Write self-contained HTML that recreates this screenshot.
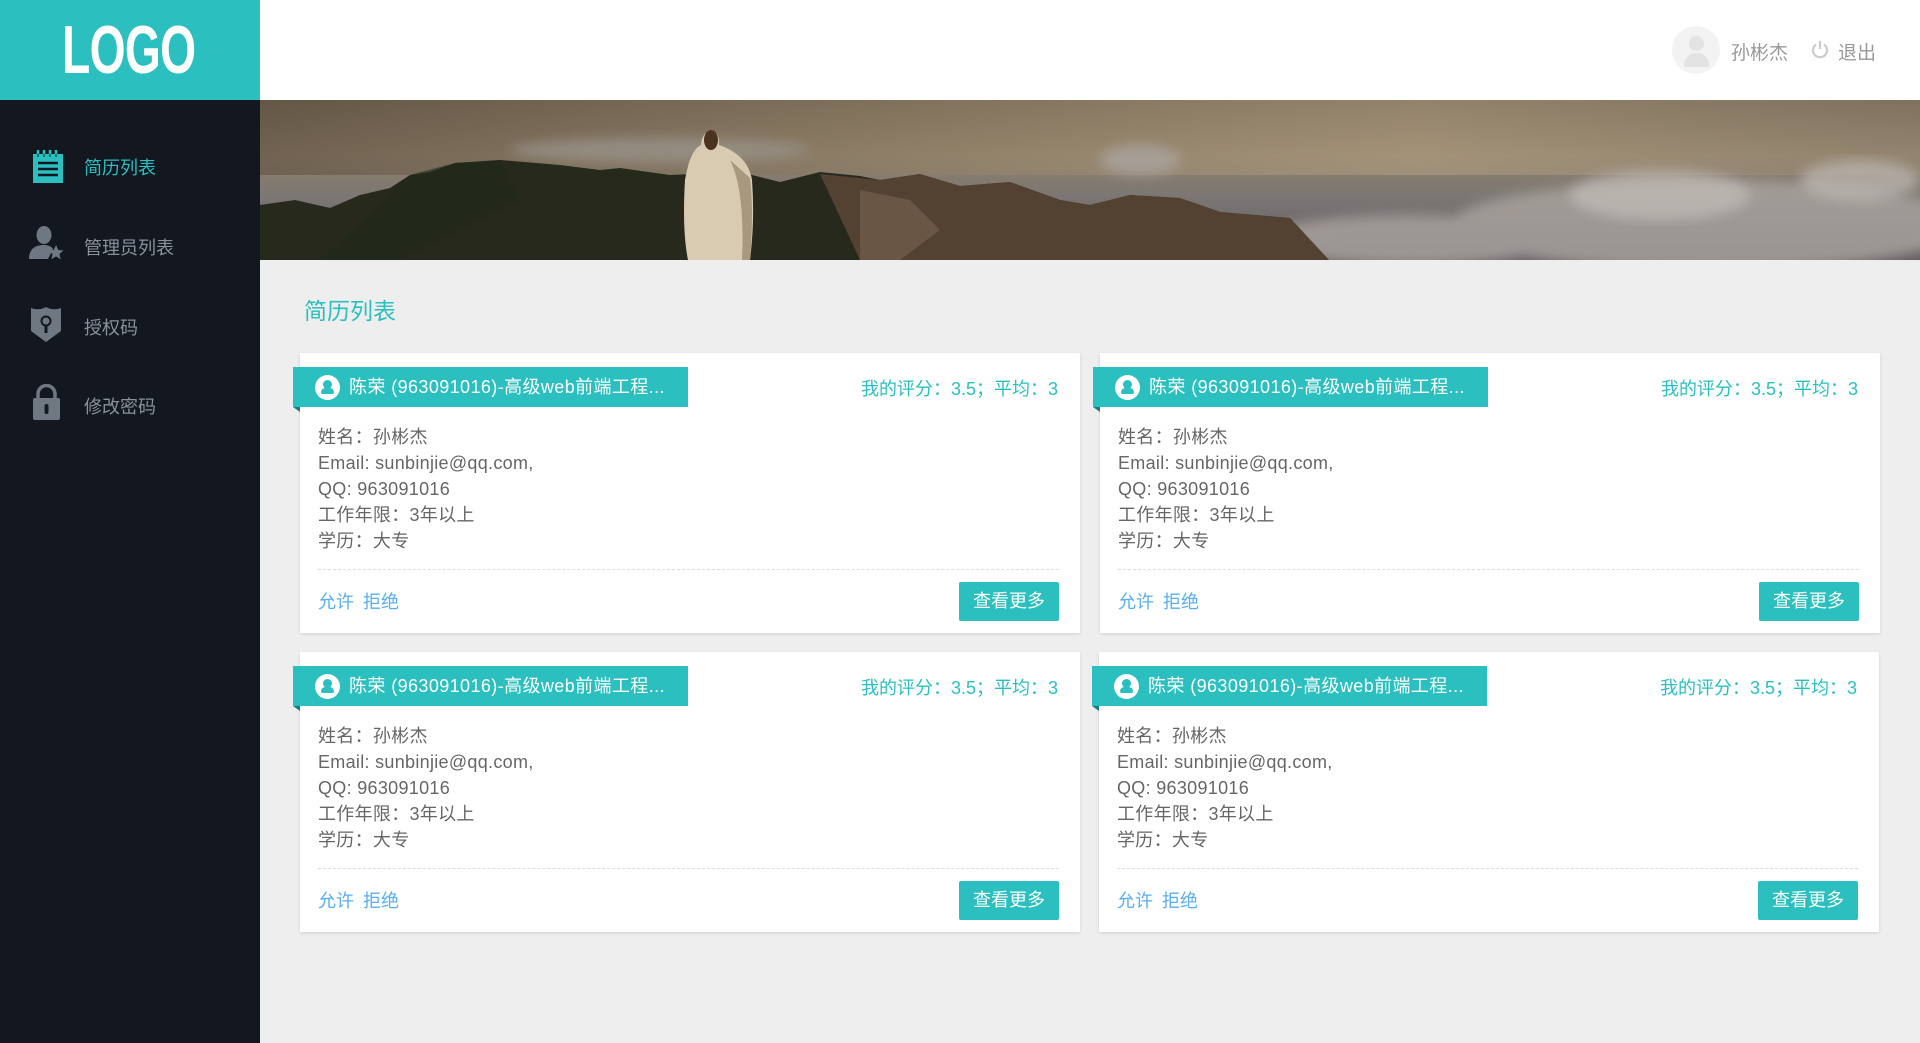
<!DOCTYPE html>
<html><head><meta charset="utf-8"><style>
*{margin:0;padding:0;box-sizing:border-box}
body{width:1920px;height:1043px;overflow:hidden;background:#eeeeee;font-family:"Liberation Sans","Noto Sans CJK SC",sans-serif;position:relative}
.logo{position:absolute;left:0;top:0;width:260px;height:100px;background:#2bbfbf}
.logo span{position:absolute;left:62px;top:14px;color:#fff;font:bold 68px/72px "Liberation Sans",sans-serif;letter-spacing:-1px;transform:scaleX(0.68);transform-origin:0 0;display:block;white-space:nowrap}
.side{position:absolute;left:0;top:100px;width:260px;height:943px;background:#131820}
.nav{position:absolute;left:84px;font-size:18px;color:#8a919a}
.head{position:absolute;left:260px;top:0;width:1660px;height:100px;background:#fff}
.banner{position:absolute;left:260px;top:100px;width:1660px;height:160px}
.title{position:absolute;left:304px;top:292px;font-size:23px;color:#2bbfbf}
.card{position:absolute;width:780px;height:280px;background:#fff;box-shadow:0 1px 3px rgba(0,0,0,.12)}
.tag{position:absolute;left:-7px;top:14px;width:395px;height:40px;background:#2bbfbf;color:#fff;font-size:18px;line-height:40px;padding-left:56px;white-space:nowrap;letter-spacing:0.4px}
.tag .ic{position:absolute;left:22px;top:8px;width:25px;height:25px;border-radius:50%;background:#fff}
.tag .ic:before{content:"";position:absolute;left:8px;top:5px;width:9px;height:9px;border-radius:50%;background:#2bbfbf}
.tag .ic:after{content:"";position:absolute;left:6px;top:13px;width:13px;height:6px;border-radius:5px 5px 2px 2px;background:#2bbfbf}
.tag:after{content:"";position:absolute;left:0;top:40px;border-top:5px solid #1a7d7d;border-left:7px solid transparent}
.score{position:absolute;right:22px;top:22px;font-size:18px;color:#2bbfbf}
.info{position:absolute;left:18px;top:71px;font-size:18px;line-height:26px;color:#666;letter-spacing:0.3px}
.dash{position:absolute;left:18px;right:21px;top:216px;border-top:1px dashed #ddd}
.acts{position:absolute;left:18px;top:235px;font-size:18px;color:#5aaef0;word-spacing:4px}
.btn{position:absolute;right:21px;top:229px;width:100px;height:39px;background:#2bbfbf;color:#fff;font-size:18px;line-height:39px;text-align:center;border-radius:2px}
</style></head><body>
<div class="head">
 <div style="position:absolute;left:1412px;top:26px;width:48px;height:48px;border-radius:50%;background:#f3f3f3;overflow:hidden">
  <div style="position:absolute;left:17px;top:10px;width:15px;height:15px;border-radius:50%;background:#e3e3e3"></div>
  <div style="position:absolute;left:12px;top:27px;width:25px;height:14px;border-radius:12px 12px 2px 2px;background:#e3e3e3"></div>
 </div>
 <div style="position:absolute;left:1471px;top:38px;font-size:19px;color:#999">孙彬杰</div>
 <svg style="position:absolute;left:1550px;top:40px" width="20" height="20" viewBox="0 0 20 20"><path d="M6 4.5A7 7 0 1 0 14 4.5" fill="none" stroke="#ccc" stroke-width="2.2"/><path d="M10 1V9" stroke="#ccc" stroke-width="2.2"/></svg>
 <div style="position:absolute;left:1578px;top:38px;font-size:19px;color:#999">退出</div>
</div>
<div class="logo"><span>LOGO</span></div>
<div class="side">
 <svg style="position:absolute;left:33px;top:50px" width="30" height="34" viewBox="0 0 30 34"><rect x="0" y="4" width="30" height="29" fill="#2bbfbf"/><path d="M5 0v6M11 0v6M17 0v6M23 0v6" stroke="#2bbfbf" stroke-width="2.5"/><path d="M5 4v3M11 4v3M17 4v3M23 4v3" stroke="#131820" stroke-width="1"/><path d="M5 13H25M5 19H25M5 25H25" stroke="#131820" stroke-width="2.5"/></svg>
 <div class="nav" style="top:54px;color:#2bbfbf">简历列表</div>
 <svg style="position:absolute;left:28px;top:125px" width="36" height="36" viewBox="0 0 36 36"><ellipse cx="16" cy="10" rx="7.5" ry="9" fill="#6f7782"/><path d="M1 34C1 24 7 20 16 20C21 20 24 22 25 24L20 34Z" fill="#6f7782"/><path d="M28 20l2.3 5 5.2.5-4 3.5 1.2 5.2-4.7-2.8-4.7 2.8 1.2-5.2-4-3.5 5.2-.5z" fill="#6f7782"/></svg>
 <div class="nav" style="top:134px">管理员列表</div>
 <svg style="position:absolute;left:31px;top:207px" width="30" height="35" viewBox="0 0 30 35"><path d="M0 1Q8 4 15 0Q22 4 30 1V24L15 35L0 24Z" fill="#6f7782"/><circle cx="15" cy="14" r="4.5" fill="none" stroke="#131820" stroke-width="2"/><path d="M15 18V26" stroke="#131820" stroke-width="3"/></svg>
 <div class="nav" style="top:214px">授权码</div>
 <svg style="position:absolute;left:33px;top:284px" width="27" height="36" viewBox="0 0 27 36"><path d="M5 15V10A8.5 8.5 0 0 1 22 10V15" fill="none" stroke="#6f7782" stroke-width="3.5"/><rect x="0" y="14" width="27" height="22" rx="2" fill="#6f7782"/><rect x="11.5" y="20" width="4" height="10" rx="2" fill="#131820"/></svg>
 <div class="nav" style="top:293px">修改密码</div>
</div>
<svg class="banner" viewBox="0 0 1660 160" preserveAspectRatio="none">
<defs><linearGradient id="sky" x1="0" y1="0" x2="0" y2="1"><stop offset="0" stop-color="#6e604e"/><stop offset=".35" stop-color="#8f806a"/><stop offset=".6" stop-color="#7c7774"/><stop offset="1" stop-color="#5f5c62"/></linearGradient>
<linearGradient id="sun" x1="0" y1="0" x2="1" y2="0"><stop offset="0" stop-color="#5d5040" stop-opacity=".6"/><stop offset=".7" stop-color="#b8a586" stop-opacity=".5"/><stop offset="1" stop-color="#988a76" stop-opacity=".4"/></linearGradient>
<filter id="b"><feGaussianBlur stdDeviation="6"/></filter></defs>
<rect width="1660" height="160" fill="url(#sky)"/>
<rect width="1660" height="75" fill="url(#sun)"/>
<g filter="url(#b)" fill="#aaa49f" opacity=".8">
<ellipse cx="1450" cy="125" rx="260" ry="45"/><ellipse cx="1150" cy="140" rx="150" ry="25"/><ellipse cx="880" cy="60" rx="40" ry="15"/><ellipse cx="400" cy="50" rx="150" ry="12" fill="#99938a"/>
</g>
<g filter="url(#b)" fill="#c8c3be" opacity=".6"><ellipse cx="1400" cy="95" rx="90" ry="25"/><ellipse cx="1600" cy="80" rx="60" ry="20"/></g>
<path d="M0 105L35 100L70 108L100 95L130 88L150 75L170 72L195 63L240 60L300 65L340 70L360 68L410 75L480 72L520 82L560 72L600 76L620 80L660 74L700 86L750 82L800 100L830 105L870 95L920 98L960 112L1030 118L1069 160H0Z" fill="#28291d"/>
<path d="M560 74L620 80L660 74L700 86L750 82L800 100L830 105L870 95L920 98L960 112L1030 118L1069 160H600Z" fill="#5a4636" opacity=".85"/>
<path d="M600 90L650 100L680 130L640 160H600Z" fill="#7a6450" opacity=".6"/>
<path d="M150 75L195 63L240 60L260 100L200 130L140 160H60Z" fill="#1e2a1a" opacity=".6"/>
<path d="M451 31Q442 32 441 45Q430 50 425 80Q422 130 428 160H490Q495 120 492 80Q488 55 459 45Q460 32 451 31Z" fill="#d9cbb2"/>
<path d="M470 60Q485 90 482 160H490Q494 110 490 78Z" fill="#a8987e"/>
<ellipse cx="451" cy="40" rx="7" ry="10" fill="#4a3320"/>
</svg>
<div class="title">简历列表</div>

<div class="card" style="left:300px;top:353px"><div class="tag"><span class="ic"></span>陈荣 (963091016)-高级web前端工程...</div><div class="score">我的评分：3.5；平均：3</div><div class="info">姓名：孙彬杰<br>Email: sunbinjie@qq.com,<br>QQ: 963091016<br>工作年限：3年以上<br>学历：大专</div><div class="dash"></div><div class="acts">允许 拒绝</div><div class="btn">查看更多</div></div>
<div class="card" style="left:1100px;top:353px"><div class="tag"><span class="ic"></span>陈荣 (963091016)-高级web前端工程...</div><div class="score">我的评分：3.5；平均：3</div><div class="info">姓名：孙彬杰<br>Email: sunbinjie@qq.com,<br>QQ: 963091016<br>工作年限：3年以上<br>学历：大专</div><div class="dash"></div><div class="acts">允许 拒绝</div><div class="btn">查看更多</div></div>
<div class="card" style="left:300px;top:652px"><div class="tag"><span class="ic"></span>陈荣 (963091016)-高级web前端工程...</div><div class="score">我的评分：3.5；平均：3</div><div class="info">姓名：孙彬杰<br>Email: sunbinjie@qq.com,<br>QQ: 963091016<br>工作年限：3年以上<br>学历：大专</div><div class="dash"></div><div class="acts">允许 拒绝</div><div class="btn">查看更多</div></div>
<div class="card" style="left:1099px;top:652px"><div class="tag"><span class="ic"></span>陈荣 (963091016)-高级web前端工程...</div><div class="score">我的评分：3.5；平均：3</div><div class="info">姓名：孙彬杰<br>Email: sunbinjie@qq.com,<br>QQ: 963091016<br>工作年限：3年以上<br>学历：大专</div><div class="dash"></div><div class="acts">允许 拒绝</div><div class="btn">查看更多</div></div>
</body></html>
